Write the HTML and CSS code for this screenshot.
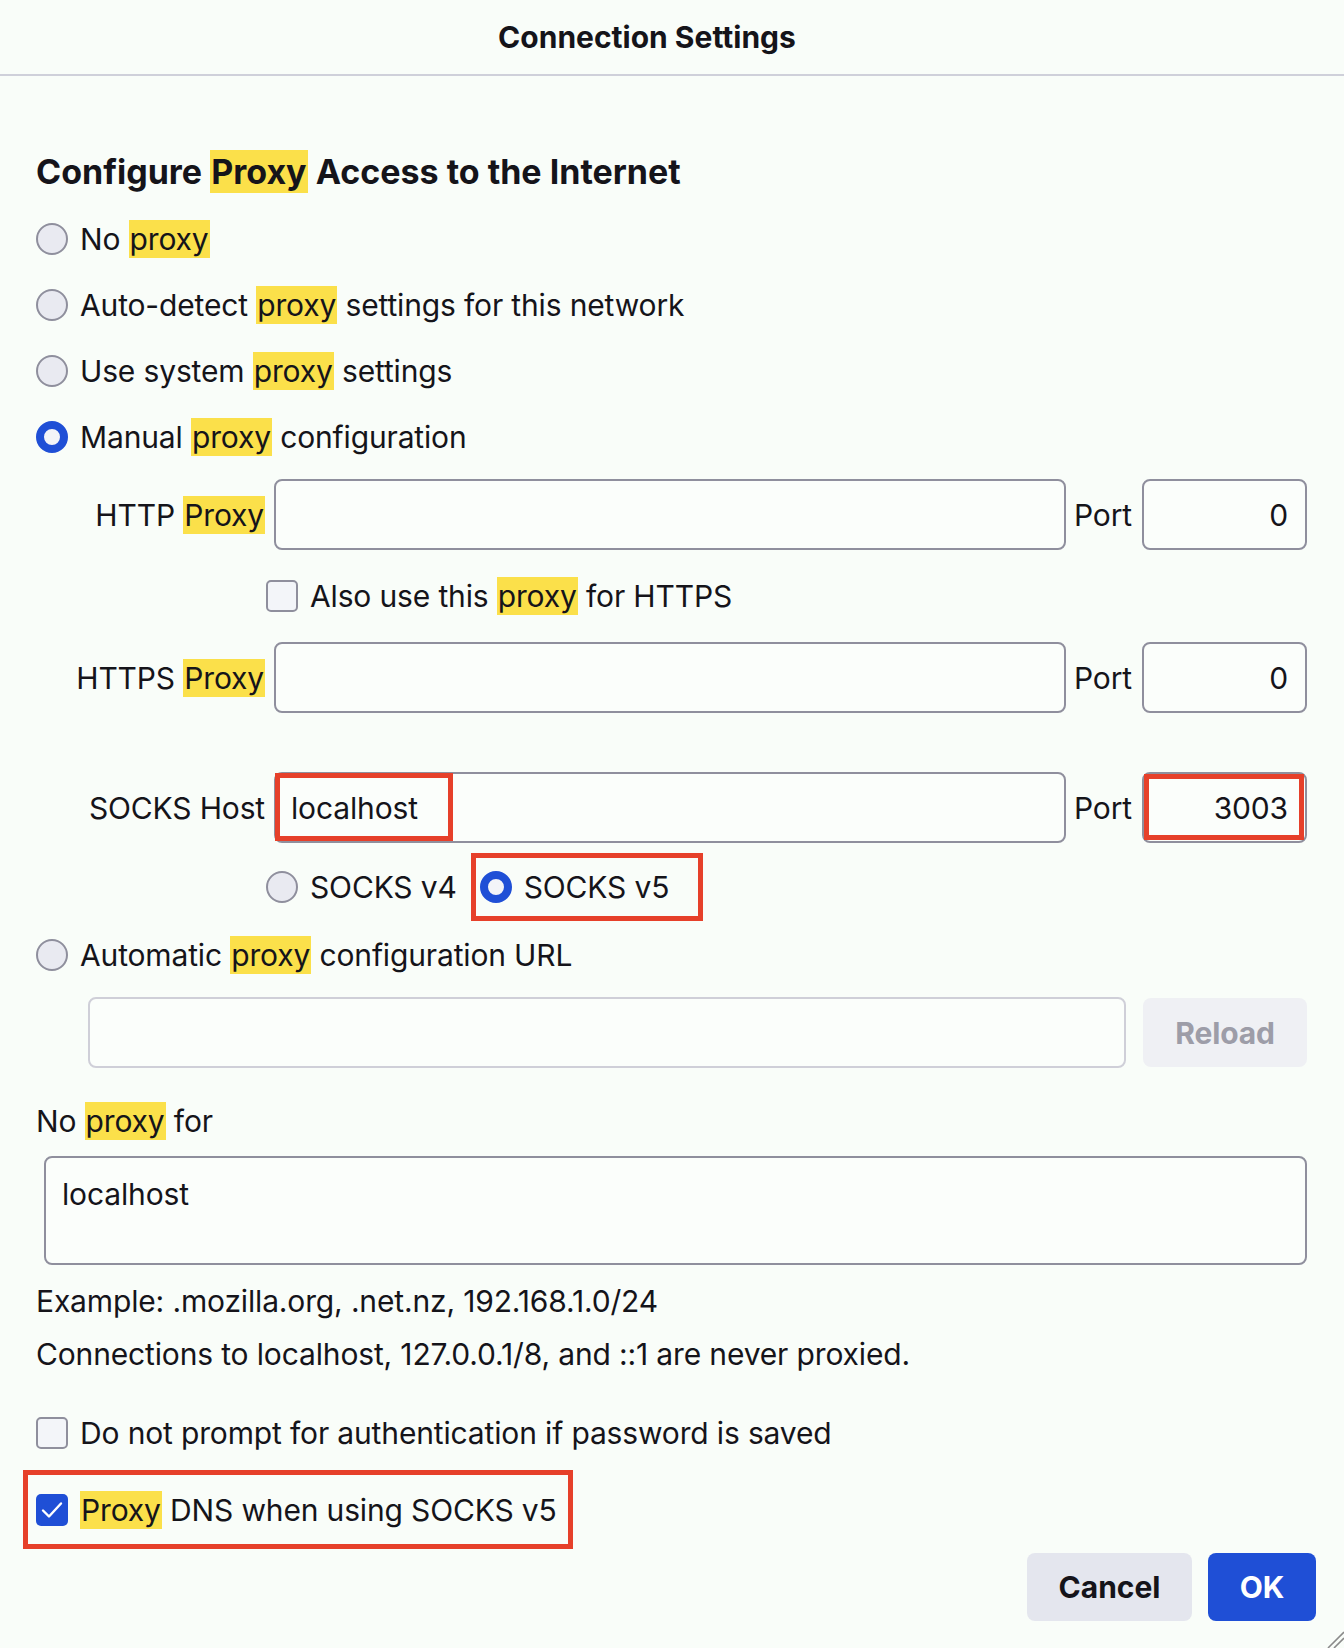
FILE: index.html
```html
<!DOCTYPE html>
<html lang="en">
<head>
<meta charset="utf-8">
<title>Connection Settings</title>
<link rel="stylesheet" href="styles.css">
</head>
<body>
<div class="dialog">
  <header class="titlebar"><h1 class="title">Connection Settings</h1></header>
  <main class="content">
    <h2 class="heading">Configure <span class="hl">Proxy</span> Access to the Internet</h2>

    <div class="opt"><span class="radio"></span><span>No <span class="hl">proxy</span></span></div>
    <div class="opt"><span class="radio"></span><span>Auto-detect <span class="hl">proxy</span> settings for this network</span></div>
    <div class="opt"><span class="radio"></span><span>Use system <span class="hl">proxy</span> settings</span></div>
    <div class="opt"><span class="radio checked"></span><span>Manual <span class="hl">proxy</span> configuration</span></div>

    <div class="prow first">
      <span class="plabel">HTTP <span class="hl">Proxy</span></span>
      <div class="field"></div>
      <span class="portlabel">Port</span>
      <div class="field port">0</div>
    </div>

    <div class="also"><span class="check"></span><span>Also use this <span class="hl">proxy</span> for HTTPS</span></div>

    <div class="prow">
      <span class="plabel">HTTPS <span class="hl">Proxy</span></span>
      <div class="field"></div>
      <span class="portlabel">Port</span>
      <div class="field port">0</div>
    </div>

    <div class="prow socks">
      <span class="plabel">SOCKS Host</span>
      <div class="field hostfield">localhost<span class="mark mark-host"></span></div>
      <span class="portlabel">Port</span>
      <div class="field port portfield">3003<span class="mark mark-port"></span></div>
    </div>

    <div class="socksver">
      <span class="radio"></span><span class="vlabel">SOCKS v4</span>
      <div class="markbox"><span class="radio checked"></span><span>SOCKS v5</span></div>
    </div>

    <div class="opt auto"><span class="radio"></span><span>Automatic <span class="hl">proxy</span> configuration URL</span></div>

    <div class="urlrow">
      <div class="field urlfield"></div>
      <span class="reload">Reload</span>
    </div>

    <div class="label">No <span class="hl">proxy</span> for</div>
    <div class="textarea">localhost</div>

    <p class="note first-note">Example: .mozilla.org, .net.nz, 192.168.1.0/24</p>
    <p class="note">Connections to localhost, 127.0.0.1/8, and ::1 are never proxied.</p>

    <div class="opt prompt"><span class="check"></span><span>Do not prompt for authentication if password is saved</span></div>

    <div class="dnsbox">
      <span class="check checked"><svg viewBox="0 0 32 32" width="32" height="32"><polyline points="7,16.5 13,22.5 25,9.5" fill="none" stroke="#ffffff" stroke-width="2.4" stroke-linecap="round" stroke-linejoin="round"/></svg></span>
      <span><span class="hl">Proxy</span> DNS when using SOCKS v5</span>
    </div>

    <div class="buttons">
      <span class="btn cancel">Cancel</span>
      <span class="btn ok">OK</span>
    </div>
  </main>
  <svg class="grip" viewBox="0 0 20 20" width="20" height="20"><line x1="4" y1="20" x2="20" y2="4" stroke="#8a8a8a" stroke-width="1.6"/><line x1="10" y1="20" x2="20" y2="10" stroke="#8a8a8a" stroke-width="1.6"/></svg>
</div>
</body>
</html>
```

FILE: styles.css
```css
html, body {
  margin: 0;
  padding: 0;
  background: #f9fdf9;
}

body {
  font-family: Inter, "Noto Sans", sans-serif;
  font-size: 30px;
  letter-spacing: -0.15px;
  color: #15141a;
}

.dialog {
  position: relative;
  height: 1648px;
  overflow: hidden;
}

.titlebar {
  height: 76px;
  box-sizing: border-box;
  border-bottom: 2px solid #cfd0da;
  display: flex;
  align-items: center;
  justify-content: center;
  padding-right: 50px;
}

.title {
  margin: 0;
  font-size: 30px;
  font-weight: 700;
  letter-spacing: 0;
}

.content {
  padding: 0 37px 0 36px;
}

.heading {
  margin: 74px 0 12px;
  font-size: 34px;
  font-weight: 700;
  line-height: 44px;
  letter-spacing: 0;
}

.hl {
  background: #fbe04a;
  padding: 1px 1px;
}

.opt {
  display: flex;
  align-items: center;
  gap: 12px;
  height: 66px;
}

.radio {
  flex: none;
  width: 32px;
  height: 32px;
  box-sizing: border-box;
  border-radius: 50%;
  border: 2px solid #8f8f9d;
  background: #e9eaf1;
}

.radio.checked {
  border: 8.5px solid #1f4fd6;
  background: #f3f4f8;
}

.check {
  flex: none;
  width: 32px;
  height: 32px;
  box-sizing: border-box;
  border-radius: 5px;
  border: 2px solid #8f8f9d;
  background: #f3f5f9;
}

.check.checked {
  border: none;
  background: #1f4fd6;
  display: flex;
}

.prow {
  display: grid;
  grid-template-columns: 238px 792px 76px 165px;
  align-items: center;
  height: 71px;
}

.prow.first {
  margin-top: 9px;
}

.prow.socks {
  margin-top: 59px;
}

.plabel {
  text-align: right;
  padding-right: 9px;
  white-space: nowrap;
}

.portlabel {
  padding-left: 8px;
}

.field {
  position: relative;
  height: 71px;
  box-sizing: border-box;
  border: 2px solid #8f8f9d;
  border-radius: 8px;
  background: #fbfefb;
  padding: 0 15px;
  display: flex;
  align-items: center;
}

.field.port {
  justify-content: flex-end;
  padding-right: 17px;
}

.mark {
  position: absolute;
  box-sizing: border-box;
  border: 5px solid #e6402a;
}

.mark-host {
  left: -1px;
  top: -1px;
  width: 178px;
  height: 68px;
}

.mark-port {
  left: 0px;
  top: 0px;
  width: 160px;
  height: 66px;
}

.also {
  display: flex;
  align-items: center;
  gap: 12px;
  height: 92px;
  padding-left: 230px;
}

.socksver {
  display: flex;
  align-items: center;
  gap: 12px;
  height: 68px;
  margin-top: 10px;
  padding-left: 230px;
}

.markbox {
  margin-left: 2px;
  height: 68px;
  box-sizing: border-box;
  border: 5px solid #e6402a;
  padding: 0 29px 0 4px;
  display: flex;
  align-items: center;
  gap: 12px;
}

.opt.auto {
  height: 68px;
}

.urlrow {
  display: flex;
  align-items: center;
  gap: 17px;
  margin-top: 8px;
  padding-left: 52px;
}

.urlfield {
  width: 1038px;
  border-color: #cfcfd8;
}

.reload {
  width: 164px;
  height: 69px;
  border-radius: 8px;
  background: #eff0f4;
  color: #9d9da8;
  font-weight: 700;
  display: flex;
  align-items: center;
  justify-content: center;
}

.label {
  margin-top: 20px;
  height: 66px;
  line-height: 66px;
}

.textarea {
  margin: 2px 0 0 8px;
  height: 109px;
  box-sizing: border-box;
  border: 2px solid #8f8f9d;
  border-radius: 8px;
  background: #fbfefb;
  padding: 19px 16px 0;
  line-height: 34px;
}

.note {
  margin: 0;
  line-height: 53px;
}

.note.first-note {
  margin-top: 10px;
}

.opt.prompt {
  margin-top: 19px;
}

.dnsbox {
  margin: 4px 0 0 -13px;
  width: 550px;
  height: 79px;
  box-sizing: border-box;
  border: 5px solid #e6402a;
  padding-left: 8px;
  display: flex;
  align-items: center;
  gap: 12px;
}

.buttons {
  display: flex;
  justify-content: flex-end;
  gap: 16px;
  margin: 4px -9px 0 0;
}

.btn {
  height: 68px;
  border-radius: 8px;
  font-weight: 700;
  letter-spacing: 0;
  display: flex;
  align-items: center;
  justify-content: center;
}

.btn.cancel {
  width: 165px;
  background: #e4e6ee;
  color: #15141a;
}

.btn.ok {
  width: 108px;
  background: #1f4fd6;
  color: #ffffff;
}

.grip {
  position: absolute;
  right: 0;
  bottom: 0;
}
```
